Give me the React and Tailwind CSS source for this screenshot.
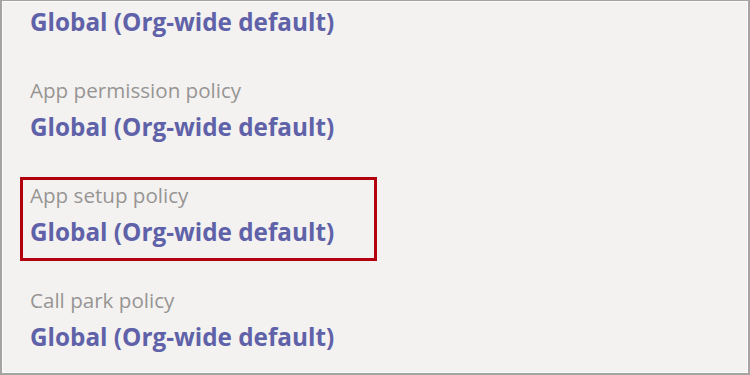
import React from "react";

// first entry is scrolled so only its value shows
const policies = [
  { id: "top", value: "Global (Org-wide default)" },
  { id: "perm", label: "App permission policy", value: "Global (Org-wide default)" },
  { id: "setup", label: "App setup policy", value: "Global (Org-wide default)", highlighted: true },
  { id: "park", label: "Call park policy", value: "Global (Org-wide default)" },
];

function PolicyItem({ label, value, highlighted }) {
  return (
    <div
      className={
        "ml-[20px] w-[357px] border-[3px] px-[7px] pt-[3px] pb-[11px] " +
        (highlighted ? "border-[#b3000f]" : "border-transparent")
      }
    >
      {label && (
        <div className="mb-[10px] text-[20.6px] leading-[24px] text-[#979593] whitespace-nowrap">
          {label}
        </div>
      )}
      <div className="text-[24.3px] leading-[30px] font-bold text-[#5f62a8] whitespace-nowrap">
        {value}
      </div>
    </div>
  );
}

export default function App() {
  return (
    <div
      className="w-[750px] h-[375px] overflow-hidden bg-[#f3f2f1] border-t border-l-2 border-r-2 border-b-2 border-[#a5a4a2]"
      style={{ fontFamily: '"Open Sans", "Noto Sans", sans-serif' }}
    >
      <div className="h-full border border-[#fbfafa] overflow-hidden">
        <div className="-mt-[1px] -ml-[3px] flex flex-col gap-[21px]">
          {policies.map((p) => (
            <PolicyItem key={p.id} {...p} />
          ))}
        </div>
      </div>
    </div>
  );
}
